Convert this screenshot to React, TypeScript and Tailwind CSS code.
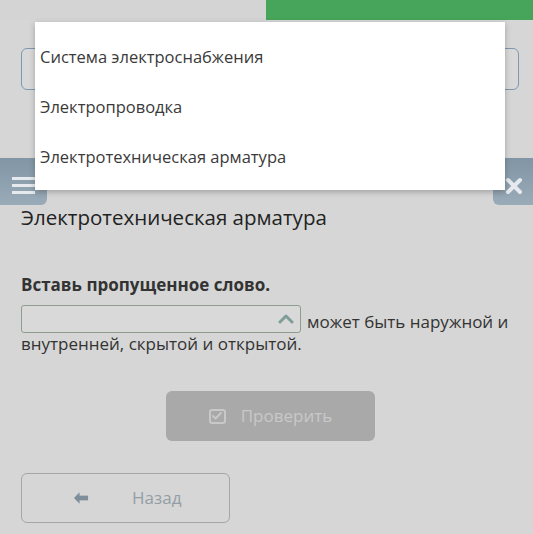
import { Check } from 'lucide-react';

const options = ['Система электроснабжения', 'Электропроводка', 'Электротехническая арматура'];

const App = () => {
  return (
    <div className="relative w-[533px] h-[534px] overflow-hidden bg-[#d6d6d6] font-['Open_Sans',sans-serif] text-[#2f2f2f]">
      {/* Top strip */}
      <div className="flex h-[20px]">
        <div className="w-[266px] bg-[#d4d4d4]" />
        <div className="flex-1 bg-[#46a55a]" />
      </div>

      {/* Input behind menu */}
      <div className="mt-[28px] ml-[21px] w-[498px] h-[42px] rounded-md border border-[#7e98b0] bg-[#d8d8d8]" />

      {/* Corner buttons */}
      <div className="mt-[68px] flex justify-between h-[47px]">
        <div className="w-[47px] bg-gradient-to-b from-[#8195a5] to-[#9aabb8] rounded-br-md flex items-center pl-[12px]">
          <div className="flex flex-col gap-[4px] mt-[8px]">
            <span className="block w-[23px] h-[3px] bg-[#e6eaee]" />
            <span className="block w-[23px] h-[3px] bg-[#e6eaee]" />
            <span className="block w-[23px] h-[3px] bg-[#e6eaee]" />
          </div>
        </div>
        <div className="w-[40px] bg-gradient-to-b from-[#8195a5] to-[#9aabb8] rounded-bl-md flex items-center justify-center">
          <svg width="18" height="18" viewBox="0 0 18 18" className="mt-[8px] ml-[2px]">
            <path d="M3 3 L15 15 M15 3 L3 15" stroke="#e6eaee" strokeWidth="4" strokeLinecap="round" />
          </svg>
        </div>
      </div>

      {/* Content */}
      <div className="px-[21px]">
        <h1 className="text-[20.5px] leading-[24px] text-[#222]">Электротехническая арматура</h1>
        <p className="mt-[44px] text-[17px] leading-[24px] font-bold text-[#333]">Вставь пропущенное слово.</p>
        <div className="mt-[8px] flex items-end gap-[6px]">
          <div className="w-[280px] h-[28px] rounded-[3px] border border-[#8d9d90] bg-[#d9d9d9] flex items-center justify-end pr-[6px]">
            <svg width="16" height="10" viewBox="0 0 16 10">
              <path d="M2 8 L8 2 L14 8" stroke="#7f9e97" strokeWidth="3" fill="none" strokeLinecap="round" strokeLinejoin="round" />
            </svg>
          </div>
          <span className="text-[17px] leading-[22px] text-[#333]">может быть наружной и</span>
        </div>
        <p className="text-[17px] leading-[22px] text-[#333]">внутренней, скрытой и открытой.</p>
      </div>

      {/* Check button */}
      <div className="mt-[36px] ml-[166px] w-[209px] h-[50px] rounded-md bg-[#a9a9a9] flex items-center justify-center gap-[15px] text-[#c8c8c8]">
        <span className="w-[17px] h-[15px] border-2 border-[#c8c8c8] rounded-[3px] flex items-center justify-center">
          <Check size={12} strokeWidth={4} />
        </span>
        <span className="text-[17px]">Проверить</span>
      </div>

      {/* Back button */}
      <div className="mt-[32px] ml-[21px] w-[209px] h-[50px] rounded-md border-[1.5px] border-[#a6a6a6] flex items-center">
        <svg width="16" height="14" viewBox="0 0 17 14" className="ml-[51px]">
          <path d="M7 1 L1 7 L7 13 Z" fill="#7d8f9c" />
          <rect x="6" y="4.5" width="10" height="5" fill="#7d8f9c" />
        </svg>
        <span className="ml-[43px] text-[17px] text-[#939ea6]">Назад</span>
      </div>

      {/* Dropdown menu overlay */}
      <div className="absolute left-[35px] top-[22px] w-[470px] h-[168px] bg-white shadow-[0_2px_6px_rgba(0,0,0,0.25)] pt-[10px]">
        {options.map((o) => (
          <div key={o} className="h-[50px] flex items-center pl-[5px] text-[16.5px] text-[#3a3a3a]">
            {o}
          </div>
        ))}
      </div>
    </div>
  );
};

export default App;
